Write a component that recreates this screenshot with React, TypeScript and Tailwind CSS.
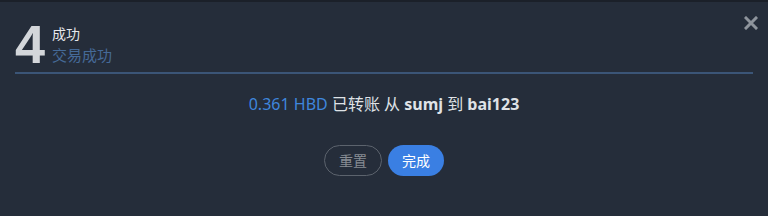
export default function App() {
  return (
    <div
      className="relative w-[768px] h-[216px] bg-[#252d3a] border-t-2 border-t-[#1b2029] overflow-hidden"
      style={{ fontFamily: '"Noto Sans", "Noto Sans CJK SC", sans-serif' }}
    >
      <button className="absolute right-[10px] top-[14px] text-[#8e949c]">
        <svg width="14" height="14" viewBox="0 0 14 14">
          <path d="M2 2 L12 12 M12 2 L2 12" stroke="currentColor" strokeWidth="3" strokeLinecap="square" />
        </svg>
      </button>
      <div className="px-[15px] pt-[20px]">
        <div className="flex items-end gap-[7px] pb-[6px] border-b-2 border-b-[#3b5577]">
          <div
            className="text-[54px] leading-[44px] font-bold text-[#d3d6da]"
            style={{ fontFamily: '"Liberation Sans", Arial, sans-serif' }}
          >
            4
          </div>
          <div className="flex flex-col">
            <span className="text-[14px] leading-[20px] text-[#e5e7eb]">成功</span>
            <span className="text-[15px] leading-[22px] text-[#456a98]">交易成功</span>
          </div>
        </div>
      </div>
      <div className="mt-[18px] text-center text-[16px] leading-[24px] text-[#dfe2e6]">
        <span className="text-[#3f86dc]">0.361 HBD</span> 已转账 从 <b>sumj</b> 到 <b>bai123</b>
      </div>
      <div className="mt-[29px] flex justify-center gap-[6px]">
        <button className="h-[31px] px-[14px] rounded-full border border-[#5c636d] text-[14px] text-[#878c94]">
          重置
        </button>
        <button className="h-[31px] px-[14px] rounded-full bg-[#3a7fe3] text-[14px] text-white">
          完成
        </button>
      </div>
    </div>
  );
}
